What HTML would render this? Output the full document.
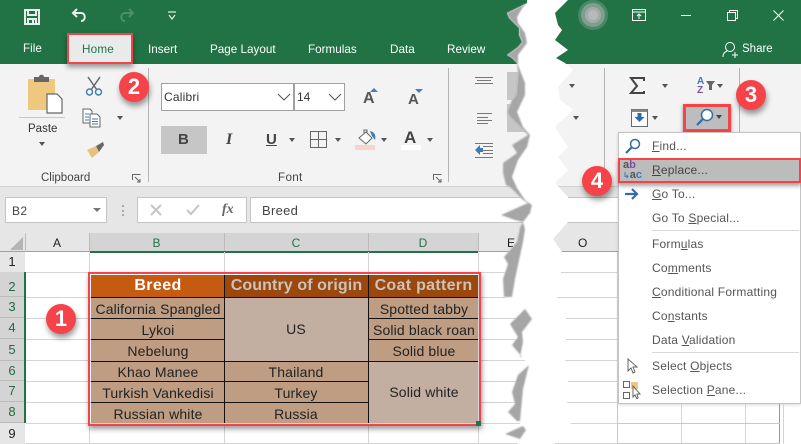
<!DOCTYPE html>
<html><head><meta charset="utf-8"><style>
html,body{margin:0;padding:0;background:#fff}
#p{position:relative;width:801px;height:444px;overflow:hidden;background:#fff;font-family:"Liberation Sans",sans-serif;font-size:12px;color:#444}
#p div,#p span,#p svg{position:absolute}
.t{white-space:nowrap;line-height:14px}
.c{white-space:nowrap;text-align:center;line-height:20px;color:#222;font-size:14px;letter-spacing:.15px}
.tab{color:#fff;top:43px;font-size:11.7px}
.m{left:652px;white-space:nowrap;line-height:14px;color:#555;letter-spacing:.2px}
.m u{text-underline-offset:1px}
.r{left:0;width:24px;text-align:center;color:#1f6b45;font-size:13px;background:#d4d4d4;border-bottom:1px solid #bbb}
.h{background:#bf9d83;border-top:1px solid #111;box-sizing:border-box}
.b{border-radius:50%;width:30px;height:30px;background:#f54349;color:#fff;text-align:center;font-size:22px;line-height:30px;font-weight:bold;box-shadow:1px 4px 6px rgba(0,0,0,.4)}
.g{height:1px;background:#d4d4d4}
.v{width:1px;background:#d4d4d4}
.d{width:0;height:0;border:3px solid transparent;border-top:4px solid #555;border-bottom:0}
</style></head><body><div id="p">
<!-- title/ribbon -->
<div style="left:0;top:0;width:801px;height:64px;background:#217346"></div>
<div style="left:0;top:64px;width:801px;height:122px;background:#f3f3f3"></div>
<div style="left:0;top:186px;width:801px;height:47px;background:#e6e6e6;border-top:1px solid #d2d2d2;box-sizing:border-box"></div>
<svg style="left:24px;top:9px" width="16" height="16" viewBox="0 0 16 16"><path d="M1 1H15V15H1Z M4 1V6H12V1 M4 15V10H12V15" fill="none" stroke="#e8f0ec" stroke-width="2"/><rect x="8" y="11" width="2" height="3" fill="#e8f0ec"/></svg>
<svg style="left:71px;top:8px" width="17" height="16" viewBox="0 0 17 16"><path d="M6 1L2 5L6 9M2 5H10C15 5 15 13 10 13" fill="none" stroke="#e8f0ec" stroke-width="2"/></svg>
<svg style="left:118px;top:8px" width="17" height="16" viewBox="0 0 17 16"><path d="M11 1L15 5L11 9M15 5H7C2 5 2 13 7 13" fill="none" stroke="#4d8f6d" stroke-width="2"/></svg>
<svg style="left:167px;top:11px" width="10" height="10" viewBox="0 0 10 10"><path d="M1 1H9M2 4L5 8L8 4" fill="none" stroke="#e0ebe5" stroke-width="1.2"/></svg>
<span class="t tab" style="left:23px;top:42px">File</span>
<div style="left:67px;top:33px;width:66px;height:31px;border:2px solid #f54349;box-sizing:border-box;background:#e9ebea;box-shadow:0 3px 5px rgba(0,0,0,.4)"></div>
<span class="t" style="left:82px;top:43px;color:#217346;font-size:11.7px;letter-spacing:.2px">Home</span>
<span class="t tab" style="left:148px">Insert</span>
<span class="t tab" style="left:210px">Page Layout</span>
<span class="t tab" style="left:308px">Formulas</span>
<span class="t tab" style="left:390px">Data</span>
<span class="t tab" style="left:447px">Review</span>
<!-- clipboard -->
<svg style="left:28px;top:74px" width="36" height="40" viewBox="0 0 36 40"><rect y="5" width="27" height="31" rx="1" fill="#edc87e"/><path d="M6 5V3H11C11 0 16 0 16 3H21V8H6Z" fill="#666"/><path d="M19 20H29L34 25V39H19Z" fill="#fff" stroke="#666" stroke-width="1.2"/></svg>
<div style="left:19px;top:117px;width:46px;height:1px;background:#c8c8c8"></div>
<span class="t" style="left:28px;top:122px;font-size:11.5px;color:#333">Paste</span>
<div class="d" style="left:39px;top:142px"></div>
<svg style="left:85px;top:76px" width="18" height="20" viewBox="0 0 18 20"><path d="M3 1L12 14M15 1L6 14" stroke="#666" stroke-width="1.5" fill="none"/><circle cx="4.5" cy="16" r="3" fill="none" stroke="#3e7ab8" stroke-width="1.4"/><circle cx="13.5" cy="16" r="3" fill="none" stroke="#3e7ab8" stroke-width="1.4"/></svg>
<svg style="left:82px;top:108px" width="19" height="20" viewBox="0 0 19 20"><path d="M1 1H8L10 3V15H1Z" fill="#fff" stroke="#666"/><path d="M8 6H15L18 9V19H8Z" fill="#fff" stroke="#666"/><path d="M3 6H7M3 9H7M3 12H7M10 11H16M10 13.5H16M10 16H16" stroke="#3e7ab8"/></svg>
<div class="d" style="left:117px;top:116px"></div>
<svg style="left:86px;top:141px" width="19" height="18" viewBox="0 0 19 18"><path d="M1 9L10 5L13 11L6 17Z" fill="#e8c27a"/><path d="M10 5L17 1L18 4L13 11Z" fill="#666"/></svg>
<span class="t" style="left:41px;top:171px;font-size:11.5px;color:#444">Clipboard</span>
<svg style="left:132px;top:174px" width="9" height="9" viewBox="0 0 9 9"><path d="M.5 6V.5H8.5M3 3L8 8M5 8H8V5" fill="none" stroke="#666"/></svg>
<div style="left:148px;top:68px;width:1px;height:114px;background:#b4b4b4"></div>
<!-- font -->
<div style="left:161px;top:83px;width:133px;height:28px;background:#fff;border:1px solid #a0a0a0;box-sizing:border-box"></div>
<div style="left:294px;top:83px;width:51px;height:28px;background:#fff;border:1px solid #a0a0a0;box-sizing:border-box"></div>
<span class="t" style="left:164px;top:90px;color:#333;letter-spacing:.2px">Calibri</span>
<span class="t" style="left:297px;top:90px;color:#333">14</span>
<svg style="left:277px;top:93px" width="14" height="8" viewBox="0 0 14 8"><path d="M1 1L7 7L13 1" fill="none" stroke="#555"/></svg>
<svg style="left:328px;top:93px" width="14" height="8" viewBox="0 0 14 8"><path d="M1 1L7 7L13 1" fill="none" stroke="#555"/></svg>
<span class="t" style="left:363px;top:89px;font-size:16px;line-height:20px;font-weight:bold;color:#555">A</span>
<svg style="left:370px;top:88px" width="8" height="4"><path d="M0 4L4 0L8 4Z" fill="#4a7ebb"/></svg>
<span class="t" style="left:408px;top:90px;font-size:15px;line-height:20px;font-weight:bold;color:#555">A</span>
<svg style="left:415px;top:89px" width="8" height="4"><path d="M0 0L4 4L8 0Z" fill="#4a7ebb"/></svg>
<div style="left:161px;top:126px;width:46px;height:28px;background:#c6c6c6"></div>
<span class="t" style="left:178px;top:132px;font-size:15px;line-height:16px;font-weight:bold;color:#444">B</span>
<span class="t" style="left:226px;top:131px;font-size:16px;line-height:18px;font-weight:bold;font-style:italic;font-family:'Liberation Serif',serif;color:#444">I</span>
<span class="t" style="left:266px;top:131px;font-size:15px;line-height:17px;font-weight:bold;color:#444;text-decoration:underline">U</span>
<div class="d" style="left:289px;top:138px"></div>
<svg style="left:310px;top:131px" width="17" height="17" viewBox="0 0 17 17"><path d="M.5.5H16.5V16.5H.5ZM8.5.5V16.5M.5 8.5H16.5" fill="none" stroke="#666"/></svg>
<div class="d" style="left:335px;top:138px"></div>
<svg style="left:357px;top:129px" width="20" height="17" viewBox="0 0 20 17"><path d="M2 9L9 3L15 9L9 15Z" fill="#fff" stroke="#666"/><path d="M7 5V1H10V4" fill="none" stroke="#666"/><path d="M13 2C18 3 19 7 18 11L15 7Z" fill="#3e7ab8"/></svg>
<div style="left:355px;top:145px;width:20px;height:5px;background:#fbd3cd"></div>
<div class="d" style="left:381px;top:138px"></div>
<span class="t" style="left:404px;top:126px;font-size:17px;line-height:24px;font-weight:bold;color:#444">A</span>
<div style="left:401px;top:145px;width:20px;height:5px;background:#fff"></div>
<div class="d" style="left:427px;top:138px"></div>
<span class="t" style="left:278px;top:171px;font-size:11.7px;letter-spacing:.3px;color:#444">Font</span>
<svg style="left:433px;top:174px" width="9" height="9" viewBox="0 0 9 9"><path d="M.5 6V.5H8.5M3 3L8 8M5 8H8V5" fill="none" stroke="#666"/></svg>
<div style="left:448px;top:68px;width:1px;height:114px;background:#b4b4b4"></div>
<!-- alignment -->
<svg style="left:474px;top:75px" width="20" height="84" viewBox="0 0 20 84"><path d="M1 2.5H19M3 5.5H17M1 8.5H19M3 38.5H18M3 42.5H14M3 45.5H18M3 48.5H14M9 71.5H19M9 75.5H19M9 78.5H19M1 68.5H19M1 82.5H19" fill="none" stroke="#777"/><path d="M1 75L6 70V73H9V77H6V80Z" fill="#3e7ab8"/></svg>
<div style="left:507px;top:72px;width:24px;height:28px;background:#c6c6c6"></div>
<div style="left:507px;top:104px;width:24px;height:28px;background:#c6c6c6"></div>
<!-- formula bar -->
<div style="left:5px;top:197px;width:102px;height:26px;background:#fff;border:1px solid #c4c4c4;box-sizing:border-box"></div>
<span class="t" style="left:12px;top:204px;color:#444;letter-spacing:.4px">B2</span>
<div style="left:93px;top:208px;width:0;height:0;border:4px solid transparent;border-top:4px solid #777;border-bottom:0"></div>
<div style="left:122px;top:205px;width:1px;height:11px;border-left:2px dotted #aaa"></div>
<div style="left:137px;top:197px;width:110px;height:26px;background:#fff;border:1px solid #c4c4c4;box-sizing:border-box"></div>
<svg style="left:150px;top:204px" width="12" height="12"><path d="M1 1L11 11M11 1L1 11" stroke="#c4c4c4" stroke-width="2"/></svg>
<svg style="left:186px;top:204px" width="14" height="12"><path d="M1 6L5 10L13 1" fill="none" stroke="#c4c4c4" stroke-width="2"/></svg>
<span class="t" style="left:222px;top:203px;font-family:'Liberation Serif',serif;font-style:italic;font-weight:bold;color:#666;font-size:14px">fx</span>
<div style="left:250px;top:197px;width:400px;height:26px;background:#fff;border:1px solid #c4c4c4;border-right:0;box-sizing:border-box"></div>
<span class="t" style="left:262px;top:204px;color:#444;font-size:13px;letter-spacing:.3px">Breed</span>
<!-- headers -->
<div style="left:0;top:233px;width:801px;height:19px;background:#e6e6e6;border-bottom:1px solid #a0a0a0;box-sizing:border-box"></div>
<svg style="left:10px;top:237px" width="13" height="13"><path d="M13 0V13H0Z" fill="#b4b4b4"/></svg>
<div style="left:89px;top:233px;width:390px;height:18px;background:#d4d4d4"></div>
<div style="left:89px;top:251px;width:390px;height:2px;background:#217346"></div>
<div class="v" style="left:25px;top:233px;height:19px;background:#bbb"></div>
<div class="v" style="left:89px;top:233px;height:19px;background:#bbb"></div>
<div class="v" style="left:224px;top:233px;height:18px;background:#bbb"></div>
<div class="v" style="left:368px;top:233px;height:18px;background:#bbb"></div>
<div class="v" style="left:478px;top:233px;height:19px;background:#bbb"></div>
<span class="t" style="left:25px;width:64px;top:236px;text-align:center;color:#222">A</span>
<span class="t" style="left:89px;width:135px;top:236px;text-align:center;color:#217346">B</span>
<span class="t" style="left:224px;width:144px;top:236px;text-align:center;color:#217346">C</span>
<span class="t" style="left:368px;width:110px;top:236px;text-align:center;color:#217346">D</span>
<span class="t" style="left:507px;top:236px;color:#222">E</span>
<span class="t" style="left:578px;top:236px;color:#222">O</span>
<!-- row headers -->
<div style="left:0;top:252px;width:25px;height:192px;background:#e6e6e6"></div>
<div class="r" style="top:272px;height:24px;line-height:30px">2</div>
<div class="r" style="top:297px;height:20px;line-height:20px">3</div>
<div class="r" style="top:318px;height:20px;line-height:20px">4</div>
<div class="r" style="top:339px;height:21px;line-height:21px">5</div>
<div class="r" style="top:361px;height:19px;line-height:20px">6</div>
<div class="r" style="top:381px;height:20px;line-height:20px">7</div>
<div class="r" style="top:402px;height:20px;line-height:20px">8</div>
<span class="t" style="left:0;width:24px;top:255px;text-align:center;color:#222;font-size:13px">1</span>
<span class="t" style="left:0;width:24px;top:427px;text-align:center;color:#222;font-size:13px">9</span>
<div style="left:24px;top:272px;width:2px;height:151px;background:#217346"></div>
<!-- grid -->
<div class="g" style="left:26px;top:272px;width:592px"></div>
<div class="g" style="left:26px;top:297px;width:592px"></div>
<div class="g" style="left:26px;top:318px;width:592px"></div>
<div class="g" style="left:26px;top:339px;width:592px"></div>
<div class="g" style="left:26px;top:360px;width:592px"></div>
<div class="g" style="left:26px;top:381px;width:592px"></div>
<div class="g" style="left:26px;top:402px;width:592px"></div>
<div class="g" style="left:26px;top:423px;width:592px"></div>
<div class="g" style="left:26px;top:443px;width:592px"></div>
<div class="v" style="left:89px;top:252px;height:192px"></div>
<div class="v" style="left:224px;top:252px;height:192px"></div>
<div class="v" style="left:368px;top:252px;height:192px"></div>
<div class="v" style="left:478px;top:252px;height:192px"></div>
<!-- table -->
<div style="left:91px;top:275px;width:134px;height:23px;background:#c55a11"></div>
<div style="left:225px;top:275px;width:253px;height:23px;background:#9c470c"></div>
<div class="h" style="left:91px;top:297px;width:134px;height:22px"></div>
<div class="h" style="left:91px;top:318px;width:134px;height:22px"></div>
<div class="h" style="left:91px;top:339px;width:134px;height:23px"></div>
<div class="h" style="left:91px;top:361px;width:134px;height:21px"></div>
<div class="h" style="left:91px;top:381px;width:134px;height:22px"></div>
<div class="h" style="left:91px;top:402px;width:134px;height:21px"></div>
<div class="h" style="left:224px;top:297px;width:145px;height:65px;background:#c2afa1"></div>
<div class="h" style="left:224px;top:361px;width:145px;height:21px"></div>
<div class="h" style="left:224px;top:381px;width:145px;height:22px"></div>
<div class="h" style="left:224px;top:402px;width:145px;height:21px"></div>
<div class="h" style="left:368px;top:297px;width:110px;height:22px"></div>
<div class="h" style="left:368px;top:318px;width:110px;height:22px"></div>
<div class="h" style="left:368px;top:339px;width:110px;height:23px"></div>
<div class="h" style="left:368px;top:361px;width:110px;height:62px;background:#c2afa1"></div>
<div style="left:224px;top:275px;width:1px;height:148px;background:#111"></div>
<div style="left:368px;top:275px;width:1px;height:148px;background:#111"></div>
<span class="c" style="left:91px;width:134px;top:276px;color:#fff;font-weight:bold;font-size:16px;letter-spacing:.4px">Breed</span>
<span class="c" style="left:225px;width:143px;top:276px;color:#c9c3bb;font-weight:bold;font-size:16px;letter-spacing:.1px">Country of origin</span>
<span class="c" style="left:369px;width:109px;top:276px;color:#c9c3bb;font-weight:bold;font-size:16px;letter-spacing:.3px">Coat pattern</span>
<span class="c" style="left:91px;width:134px;top:299px">California Spangled</span>
<span class="c" style="left:91px;width:134px;top:320px">Lykoi</span>
<span class="c" style="left:91px;width:134px;top:341px">Nebelung</span>
<span class="c" style="left:91px;width:134px;top:362px">Khao Manee</span>
<span class="c" style="left:91px;width:134px;top:383px">Turkish Vankedisi</span>
<span class="c" style="left:91px;width:134px;top:404px">Russian white</span>
<span class="c" style="left:224px;width:144px;top:319px">US</span>
<span class="c" style="left:224px;width:144px;top:362px">Thailand</span>
<span class="c" style="left:224px;width:144px;top:383px">Turkey</span>
<span class="c" style="left:224px;width:144px;top:404px">Russia</span>
<span class="c" style="left:369px;width:110px;top:299px">Spotted tabby</span>
<span class="c" style="left:369px;width:110px;top:320px">Solid black roan</span>
<span class="c" style="left:369px;width:110px;top:341px">Solid blue</span>
<span class="c" style="left:369px;width:110px;top:382px">Solid white</span>
<div style="left:88px;top:272px;width:393px;height:154px;border:2.5px solid #f54349;box-sizing:border-box;box-shadow:1px 3px 5px rgba(0,0,0,.4)"></div>
<div style="left:476px;top:421px;width:5px;height:5px;background:#217346"></div>
<!-- torn gap -->
<svg style="left:0;top:0" width="801" height="444" viewBox="0 0 801 444">
<defs><filter id="bl" x="-30%" y="-5%" width="160%" height="110%"><feGaussianBlur stdDeviation=".7"/></filter></defs>
<path d="M527 0L527 3L507 13L509 18L515 24L519 28L519 35L522 42L518 47L507 55L512 58L517 63L518 72L517 83L516 95L512 100L507 112L510 117L523 130L528 135L512 145L517 153L503 163L503 173L506 185L511 188L523 200L528 203L501 215L515 220L523 222L520 227L517 242L504 257L508 264L503 279L504 297L512 301L525 309L510 324L518 337L512 345L522 357L529 365L518 375L512 392L515 404L508 412L517 421L523 426L505 434L520 439L517 444L555 444L555 443L571 423L567 402L568 381L565 360L566 339L566 318L557 297L561 272L562 252L553 239L568 222L568 197L555 183L568 170L558 157L568 147L555 127L573 110L560 100L558 87L573 70L565 63L556 58L568 50L555 40L562 30L558 25L555 13L568 0Z" fill="#fff"/>
<g fill="#a6a6a6" filter="url(#bl)">
<path d="M527 3L507 13L509 18L515 24L519 28L519 35L522 42L518 47L507 55L512 58L517 63L518 72L517 83L516 95L512 100L507 112L510 117L523 130L528 135L512 145L517 153L503 163L503 173L506 185L511 188L523 200L528 203L501 215L515 220L523 222L530 213L532 205L525 200L517 188L512 177L518 160L527 147L530 135L523 127L517 112L525 95L525 83L518 65L518 55L527 43L525 33L518 23L517 17L523 7Z"/>
<path d="M523 222L520 227L517 242L504 257L508 264L503 279L504 297L512 297L515 279L523 242L525 229Z"/>
<path d="M525 309L510 324L518 337L512 345L522 357L520 357L523 342L522 332L532 319Z"/>
<path d="M529 365L518 375L512 392L515 404L508 412L517 421L520 421L523 389Z"/>
<path d="M523 426L505 434L520 439L526 430Z"/>
</g>
</svg>
<!-- right side -->
<svg style="left:572px;top:0" width="44" height="32"><circle cx="21" cy="15" r="15" fill="#4a8768"/><circle cx="21" cy="15" r="12" fill="#7da08e"/><circle cx="21" cy="15" r="8" fill="#a5aca8"/><circle cx="21" cy="15" r="5" fill="#b9b9b9"/></svg>
<svg style="left:632px;top:9px" width="14" height="12" viewBox="0 0 14 12"><path d="M.5.5H13.5V11.5H.5ZM.5 3H13.5M7 10V5M5 7L7 5L9 7" fill="none" stroke="#fff"/></svg>
<div style="left:681px;top:15px;width:10px;height:1px;background:#fff"></div>
<svg style="left:727px;top:10px" width="11" height="11" viewBox="0 0 11 11"><path d="M.5 2.5H8.5V10.5H.5ZM2.5 2.5V.5H10.5V8.5H8.5" fill="none" stroke="#fff"/></svg>
<svg style="left:773px;top:10px" width="11" height="11"><path d="M.5.5L10.5 10.5M10.5.5L.5 10.5" stroke="#fff"/></svg>
<svg style="left:722px;top:41px" width="16" height="17" viewBox="0 0 16 17"><circle cx="8" cy="6" r="4.5" fill="none" stroke="#fff"/><path d="M1 16C1 12 3 11 5 10M10 14H16M13 11V17" fill="none" stroke="#fff"/></svg>
<span class="t" style="left:742px;top:42px;color:#fff;font-size:11.5px">Share</span>
<div class="d" style="left:569px;top:84px"></div>
<div class="d" style="left:573px;top:116px"></div>
<div style="left:604px;top:68px;width:1px;height:114px;background:#b4b4b4"></div>
<div style="left:739px;top:68px;width:1px;height:64px;background:#b4b4b4"></div>
<svg style="left:629px;top:77px" width="16" height="18" viewBox="0 0 16 18"><path d="M15 4V1H2L8 9L2 16H15V14" fill="none" stroke="#444" stroke-width="2"/></svg>
<div class="d" style="left:662px;top:84px"></div>
<span class="t" style="left:697px;top:77px;font-size:10px;line-height:9px;font-weight:bold;color:#3e7ab8">A</span>
<span class="t" style="left:697px;top:86px;font-size:10px;line-height:9px;font-weight:bold;color:#7e4f9e">Z</span>
<svg style="left:706px;top:81px" width="9" height="9"><path d="M0 0H9L6 4V9H3V4Z" fill="#666"/></svg>
<div class="d" style="left:717px;top:84px"></div>
<svg style="left:631px;top:109px" width="17" height="18" viewBox="0 0 17 18"><path d="M.5.5H16.5V17.5H.5Z" fill="#fff" stroke="#666"/><path d="M.5.5H16.5V3H.5Z" fill="#888"/><path d="M8.5 13L3.5 8H6.5V4H10.5V8H13.5Z" fill="#2a6cb0"/></svg>
<div class="d" style="left:652px;top:116px"></div>
<div style="left:683px;top:104px;width:48px;height:28px;background:#bdbdbd;border:3px solid #f54349;box-sizing:border-box;box-shadow:0 2px 4px rgba(0,0,0,.4)"></div>
<svg style="left:695px;top:108px" width="20" height="19" viewBox="0 0 20 19"><circle cx="12" cy="7" r="5.5" fill="#fff" stroke="#2f6ea8" stroke-width="1.5"/><path d="M8 11L2 17" stroke="#2f6ea8" stroke-width="2.2"/></svg>
<div class="d" style="left:716px;top:115px;border-top-color:#444"></div>
<!-- menu -->
<div style="left:618px;top:132px;width:183px;height:272px;background:#fff;border:1px solid #c4c4c4;box-sizing:border-box;box-shadow:0 1px 3px rgba(0,0,0,.15)"></div>
<div class="v" style="left:617px;top:252px;height:192px;background:#c8c8c8"></div>
<div class="v" style="left:681px;top:404px;height:40px"></div>
<div class="v" style="left:745px;top:404px;height:40px"></div>
<div class="v" style="left:779px;top:404px;height:40px;background:#999"></div>
<div class="v" style="left:783px;top:404px;height:40px"></div>
<div class="g" style="left:618px;top:423px;width:162px;background:#c8c8c8"></div>
<div class="g" style="left:618px;top:443px;width:162px;background:#c8c8c8"></div>
<svg style="left:624px;top:138px" width="17" height="16" viewBox="0 0 17 16"><circle cx="11" cy="6" r="4.5" fill="#fff" stroke="#2f6ea8" stroke-width="1.5"/><path d="M7.5 9.5L2 15" stroke="#2f6ea8" stroke-width="2.2"/></svg>
<span class="m" style="top:139px"><u>F</u>ind...</span>
<div style="left:618px;top:158px;width:183px;height:25px;background:#bcbcbc;border:2.5px solid #f54349;box-sizing:border-box;box-shadow:0 3px 4px rgba(0,0,0,.35)"></div>
<span class="t" style="left:623px;top:160px;font-size:11px;line-height:10px;font-weight:bold;color:#555">a<span style="position:static;color:#7e4f9e">b</span></span>
<span class="t" style="left:623px;top:170px;font-size:11px;line-height:10px;font-weight:bold;color:#555"><span style="position:static;color:#3e7ab8;font-size:8px">↳</span>a<span style="position:static;color:#3e7ab8">c</span></span>
<span class="m" style="top:163px;color:#444"><u>R</u>eplace...</span>
<svg style="left:624px;top:188px" width="15" height="12" viewBox="0 0 15 12"><path d="M1 6H12M8 1L13 6L8 11" fill="none" stroke="#2f6ea8" stroke-width="2.2"/></svg>
<span class="m" style="top:187px"><u>G</u>o To...</span>
<span class="m" style="top:211px">Go To <u>S</u>pecial...</span>
<div style="left:652px;top:230px;width:147px;height:1px;background:#d8d8d8"></div>
<span class="m" style="top:237px">Form<u>u</u>las</span>
<span class="m" style="top:261px">Co<u>m</u>ments</span>
<span class="m" style="top:285px"><u>C</u>onditional Formatting</span>
<span class="m" style="top:309px">Co<u>n</u>stants</span>
<span class="m" style="top:333px">Data <u>V</u>alidation</span>
<div style="left:652px;top:352px;width:147px;height:1px;background:#d8d8d8"></div>
<svg style="left:627px;top:358px" width="12" height="17" viewBox="0 0 12 17"><path d="M1 1V13L4 10L6 15L8 14L6 9H10Z" fill="#fff" stroke="#666"/></svg>
<span class="m" style="top:359px">Select <u>O</u>bjects</span>
<svg style="left:623px;top:381px" width="18" height="18" viewBox="0 0 18 18"><path d="M.5.5H6.5V6.5H.5ZM.5 11.5H6.5V17.5H.5Z" fill="#fff" stroke="#666"/><rect x="8" y="1" width="7" height="7" fill="#edc87e"/><path d="M10 5V16L12 14L14 18L15 17L14 13H17Z" fill="#fff" stroke="#666"/></svg>
<span class="m" style="top:383px">Selection <u>P</u>ane...</span>
<!-- badges -->
<div class="b" style="left:119px;top:72px">2</div>
<div class="b" style="left:736px;top:80px">3</div>
<div class="b" style="left:582px;top:166px">4</div>
<div class="b" style="left:46px;top:304px">1</div>
</div></body></html>
